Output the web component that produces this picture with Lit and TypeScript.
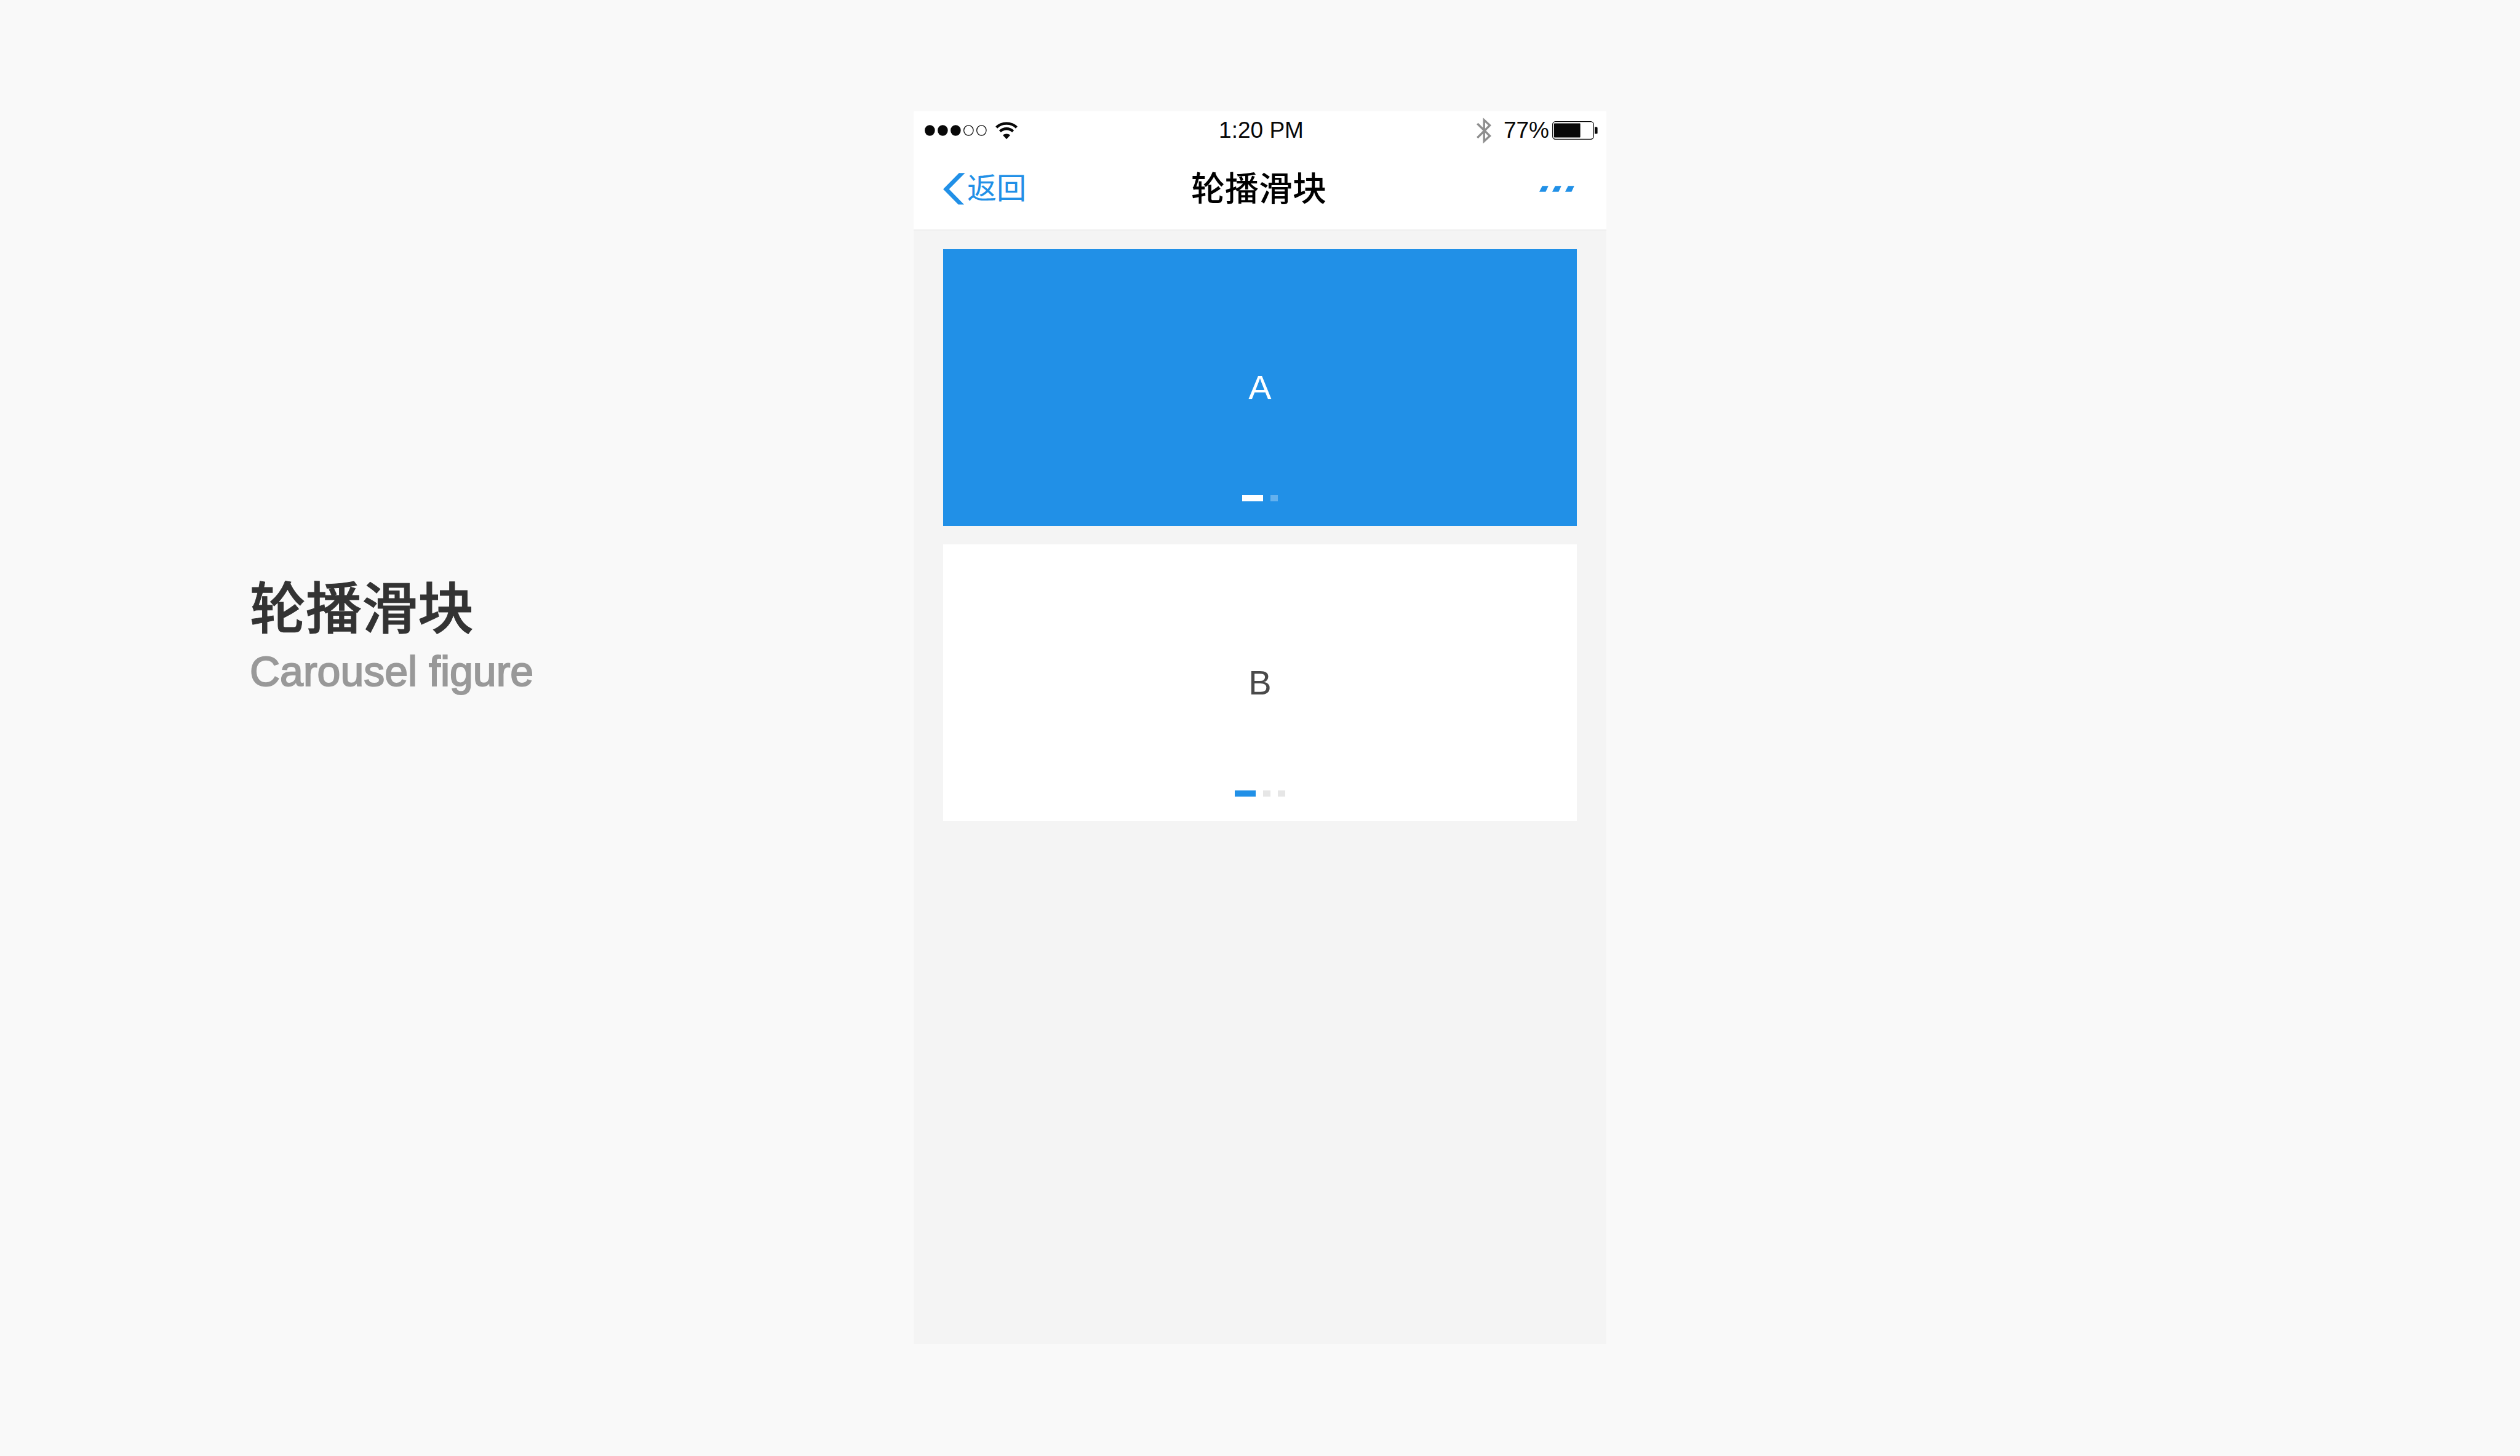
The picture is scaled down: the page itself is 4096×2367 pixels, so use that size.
import { LitElement, html, css, svg } from "lit";
import { customElement, property, state } from "lit/decorators.js";
import { classMap } from "lit/directives/class-map.js";

@customElement("carousel-card")
class CarouselCard extends LitElement {
  static styles = css`
    :host {
      display: block;
    }
    .card {
      position: relative;
      display: grid;
      place-items: center;
      aspect-ratio: 1030 / 450;
      background: #fff;
      color: #4a4a4a;
      font-size: 56px;
      line-height: 66px;
    }
    .card.filled {
      background: #2190e7;
      color: #fff;
    }
    .pager {
      position: absolute;
      left: 0;
      right: 0;
      bottom: 40px;
      display: flex;
      justify-content: center;
      gap: 12px;
    }
    .mark {
      width: 12px;
      height: 10px;
      padding: 0;
      border: 0;
      background: #e6e6e6;
      cursor: pointer;
    }
    .mark.active {
      width: 34px;
      background: #2190e7;
    }
    .filled .mark {
      background: #64b1ee;
    }
    .filled .mark.active {
      background: #fff;
    }
  `;

  @property() label = "";
  @property({ type: Number }) count = 2;
  @property({ type: Boolean }) filled = false;
  @state() private active = 0;

  render() {
    return html`
      <section class=${classMap({ card: true, filled: this.filled })}>
        <span>${this.label}</span>
        <div class="pager">
          ${Array.from(
            { length: this.count },
            (_, i) => html`<button
              type="button"
              class=${classMap({ mark: true, active: i === this.active })}
              aria-label=${`${this.label} ${i + 1}`}
              @click=${() => (this.active = i)}
            ></button>`
          )}
        </div>
      </section>
    `;
  }
}

@customElement("status-bar")
class StatusBar extends LitElement {
  static styles = css`
    :host {
      display: grid;
      grid-template-columns: 1fr auto 1fr;
      align-items: center;
      height: 62px;
      padding: 0 14px 0 18px;
      color: #080808;
      font-size: 37px;
      line-height: 44px;
    }
    svg {
      display: block;
    }
    .left {
      display: flex;
      align-items: center;
      gap: 14px;
    }
    .right {
      display: flex;
      align-items: center;
      justify-content: flex-end;
    }
    .charge {
      margin: 0 5px 0 20px;
    }
  `;

  render() {
    return html`
      <div class="left">
        <svg width="101" height="18" viewBox="0 0 101 18" aria-hidden="true">
          ${[0, 1, 2, 3, 4].map((i) =>
            i < 3
              ? svg`<ellipse cx=${8.3 + i * 21} cy="9" rx="8.3" ry="8.8" fill="#080808"/>`
              : svg`<ellipse cx=${8.3 + i * 21} cy="9" rx="7.7" ry="8.2" fill="none" stroke="#080808" stroke-width="1.3"/>`
          )}
        </svg>
        <svg width="36" height="29" viewBox="0 0 36 29" aria-hidden="true">
          <g fill="none" stroke="#080808" stroke-width="4.4">
            <path d="M1.6 9.2C10.5 0.4 25.5 0.4 34.4 9.2" />
            <path d="M7.4 15.6C13.5 9.8 22.5 9.8 28.6 15.6" />
          </g>
          <path d="M12 21.8C15.5 18.6 20.5 18.6 24 21.8L18 28.2Z" fill="#080808" />
        </svg>
      </div>
      <time>1:20 PM</time>
      <div class="right">
        <svg width="24" height="43" viewBox="0 0 24 43" aria-hidden="true">
          <path
            d="M1.3 10L21.6 30L12.2 38.6V4.2L21.6 12.8L1.3 33"
            fill="none"
            stroke="#8e8e8e"
            stroke-width="3.4"
          />
        </svg>
        <span class="charge">77%</span>
        <svg width="74" height="30" viewBox="0 0 74 30" aria-hidden="true">
          <rect x="0.7" y="0.7" width="66.4" height="28.6" rx="4.5" fill="none" stroke="#080808" stroke-width="1.3" />
          <rect x="3" y="3.4" width="42.6" height="23.2" rx="0.8" fill="#080808" />
          <path d="M69 9.6H72Q73.6 9.6 73.6 11V19.2Q73.6 20.6 72 20.6H69Z" fill="#080808" />
        </svg>
      </div>
    `;
  }
}

@customElement("nav-bar")
class NavBar extends LitElement {
  static styles = css`
    :host {
      display: grid;
      grid-template-columns: 1fr auto 1fr;
      align-items: center;
      height: 128px;
      padding: 0 52px 2px 48px;
    }
    svg {
      display: block;
    }
    button {
      display: flex;
      align-items: center;
      padding: 0;
      border: 0;
      background: none;
      color: #2190e7;
      font: inherit;
      cursor: pointer;
    }
    .back {
      gap: 3px;
      font-size: 48px;
      line-height: 66px;
    }
    .title {
      margin: 0;
      color: #000;
      font-size: 55px;
      line-height: 66px;
      font-weight: 500;
    }
    .more {
      justify-self: end;
    }
  `;

  render() {
    return html`
      <button type="button" class="back">
        <svg width="36" height="52" viewBox="0 0 36 52" aria-hidden="true">
          <path d="M0 26.4L25.8 0.2H35.6L9.6 26.4L34 51.4H24.6Z" fill="#2190e7" />
        </svg>
        返回
      </button>
      <h2 class="title">轮播滑块</h2>
      <button type="button" class="more" aria-label="更多">
        <svg width="57" height="10" viewBox="0 0 57 10" aria-hidden="true">
          ${[0, 21, 42].map(
            (x) => svg`<path d="M${x + 4.8} 0.2H${x + 14.8}L${x + 10.4} 9.8H${x}Z" fill="#2190e7"/>`
          )}
        </svg>
      </button>
    `;
  }
}

@customElement("app-root")
class AppRoot extends LitElement {
  static styles = css`
    :host {
      display: block;
      background: #f9f9f9;
      font-family: "Liberation Sans", "Noto Sans CJK SC", sans-serif;
    }
    .board {
      box-sizing: border-box;
      display: grid;
      grid-template-columns: 1485fr 1126fr 1485fr;
      min-height: 100vh;
      padding: 181px 0 182px;
    }
    .caption {
      padding: 750px 0 0 406px;
    }
    .name {
      margin: 0;
      color: #333;
      font-size: 91px;
      line-height: 120px;
      font-weight: 500;
      -webkit-text-stroke: 1px #333;
    }
    .subtitle {
      margin: 0;
      color: #999;
      font-size: 68px;
      line-height: 80px;
      -webkit-text-stroke: 2px #999;
    }
    .phone {
      background: #f4f4f4;
    }
    .head {
      background: #fff;
      border-bottom: 2px solid #efefef;
    }
    .cards {
      display: grid;
      gap: 30px;
      padding: 30px 48px;
    }
  `;

  render() {
    return html`
      <main class="board">
        <header class="caption">
          <h1 class="name">轮播滑块</h1>
          <p class="subtitle">Carousel figure</p>
        </header>
        <article class="phone">
          <div class="head">
            <status-bar></status-bar>
            <nav-bar></nav-bar>
          </div>
          <div class="cards">
            <carousel-card label="A" count="2" filled></carousel-card>
            <carousel-card label="B" count="3"></carousel-card>
          </div>
        </article>
      </main>
    `;
  }
}
